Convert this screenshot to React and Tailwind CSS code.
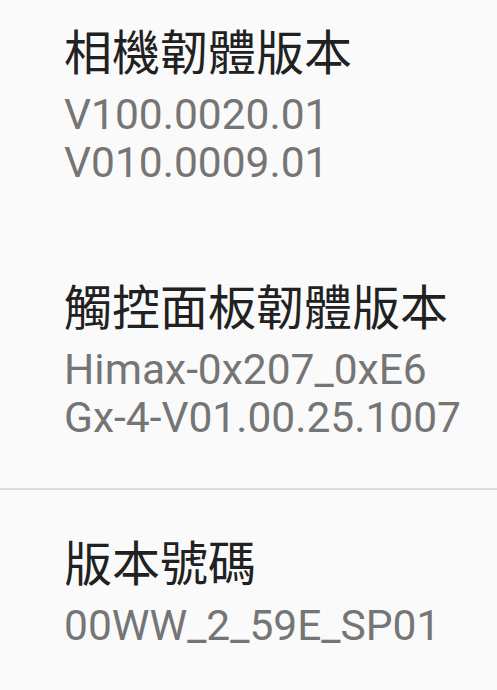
import React from "react";

const titleCls =
  "text-[48px] leading-[56px] text-[#212121] [font-family:'Noto_Sans_CJK_TC','Noto_Sans_CJK_SC',sans-serif]";
const sumCls =
  "text-[42.5px] leading-[48px] text-[#757575] [font-family:Roboto,'Noto_Sans_CJK_TC',sans-serif]";

function Item({ title, lines, className = "" }) {
  return (
    <div className={"pl-[64px] flex flex-col " + className}>
      <div className={titleCls}>{title}</div>
      <div className="mt-[14px] flex flex-col">
        {lines.map((l) => (
          <div key={l} className={sumCls}>
            {l}
          </div>
        ))}
      </div>
    </div>
  );
}

export default function App() {
  return (
    <div className="w-[497px] h-[690px] bg-[#fafafa] overflow-hidden flex flex-col">
      <Item className="pt-[21px]" title="相機韌體版本" lines={["V100.0020.01", "V010.0009.01"]} />
      <Item className="mt-[89px]" title="觸控面板韌體版本" lines={["Himax-0x207_0xE6", "Gx-4-V01.00.25.1007"]} />
      <div className="mt-[46px] h-[2px] bg-[#dcdcdc]" />
      <Item className="pt-[42px]" title="版本號碼" lines={["00WW_2_59E_SP01"]} />
    </div>
  );
}
